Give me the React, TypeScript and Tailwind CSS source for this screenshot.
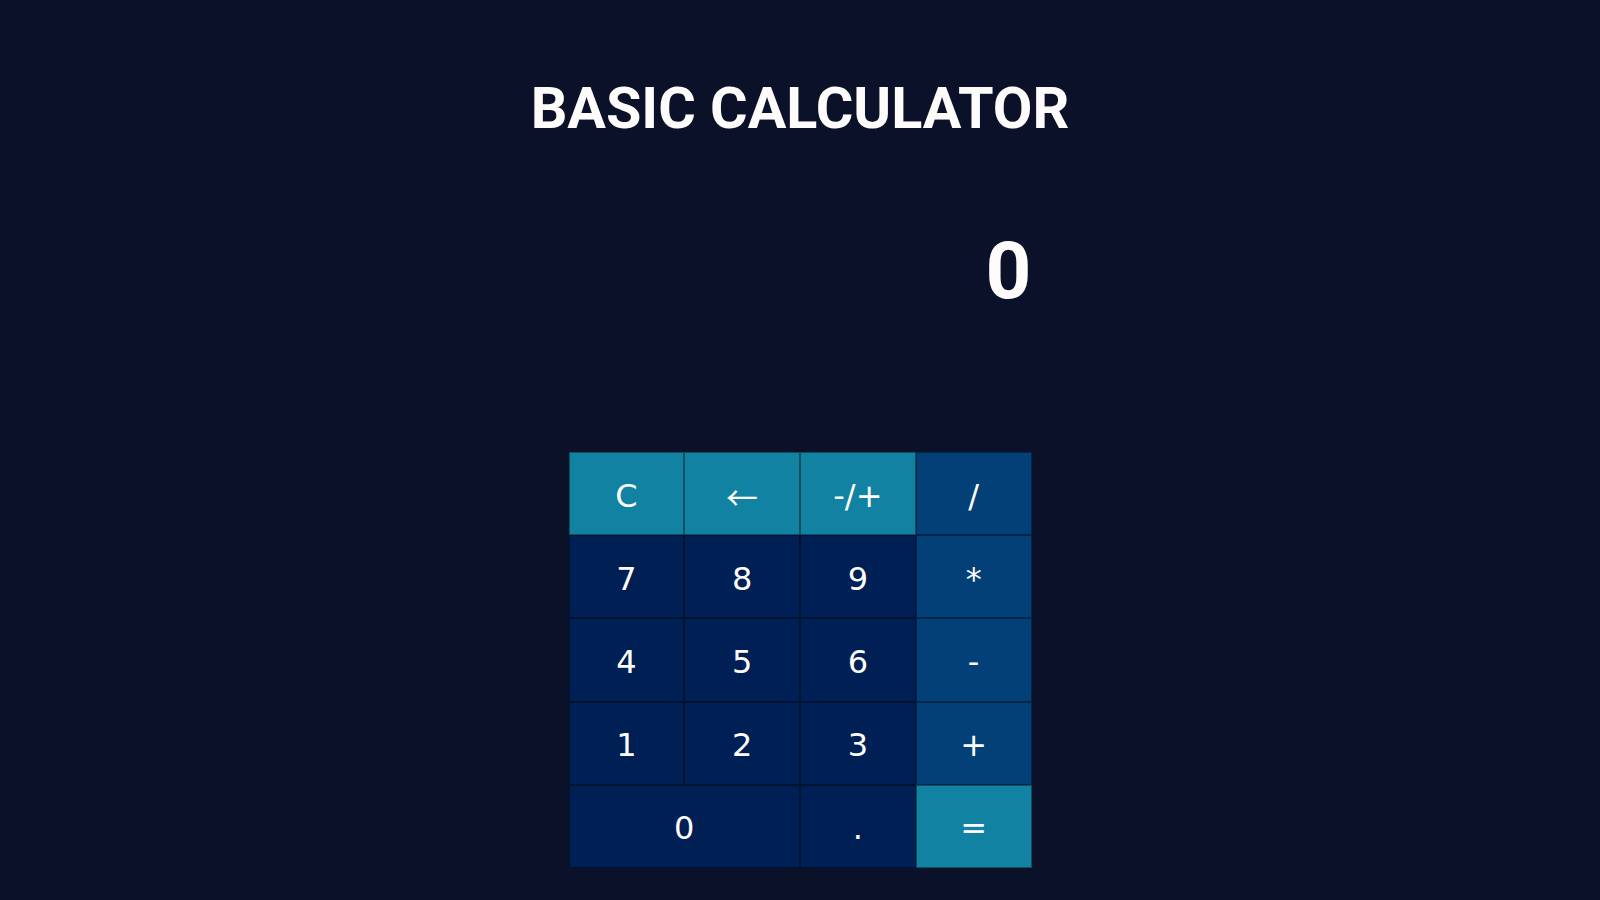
import React from "react";

type Btn = { label: string; kind: "fn" | "op" | "num" | "eq"; span?: number };

const buttons: Btn[] = [
  { label: "C", kind: "fn" },
  { label: "←", kind: "fn" },
  { label: "-/+", kind: "fn" },
  { label: "/", kind: "op" },
  { label: "7", kind: "num" },
  { label: "8", kind: "num" },
  { label: "9", kind: "num" },
  { label: "*", kind: "op" },
  { label: "4", kind: "num" },
  { label: "5", kind: "num" },
  { label: "6", kind: "num" },
  { label: "-", kind: "op" },
  { label: "1", kind: "num" },
  { label: "2", kind: "num" },
  { label: "3", kind: "num" },
  { label: "+", kind: "op" },
  { label: "0", kind: "num", span: 2 },
  { label: ".", kind: "num" },
  { label: "=", kind: "eq" },
];

const bg: Record<Btn["kind"], string> = {
  fn: "bg-[#1282a2]",
  op: "bg-[#034078]",
  num: "bg-[#001f54]",
  eq: "bg-[#1282a2]",
};

export default function App() {
  return (
    <div className="min-h-[900px] w-full bg-[#0a1128] flex flex-col items-center text-[#fefcfb]">
      <h1
        className="mt-[67px] text-[57.5px] leading-[84px] font-bold"
        style={{ fontFamily: "Roboto, 'Noto Sans', sans-serif" }}
      >
        BASIC CALCULATOR
      </h1>
      <div className="w-[463px] mt-[46px] flex flex-col">
        <div
          className="h-[148px] flex items-center justify-end text-[80px] font-bold leading-none"
          style={{ fontFamily: "Roboto, 'Noto Sans', sans-serif" }}
        >
          0
        </div>
        <div className="mt-[107px] grid grid-cols-4 w-[463px]">
          {buttons.map((b, i) => (
            <button
              key={i}
              className={`h-[83.2px] flex items-center justify-center pt-[4px] text-[32px] text-[#fefcfb] border-[0.5px] border-black/40 ${bg[b.kind]} ${b.span === 2 ? "col-span-2" : ""}`}
              style={{
                fontFamily:
                  b.label === "←"
                    ? "'Noto Sans CJK SC', 'DejaVu Sans', sans-serif"
                    : "'DejaVu Sans', Verdana, sans-serif",
              }}
            >
              {b.label}
            </button>
          ))}
        </div>
      </div>
    </div>
  );
}
